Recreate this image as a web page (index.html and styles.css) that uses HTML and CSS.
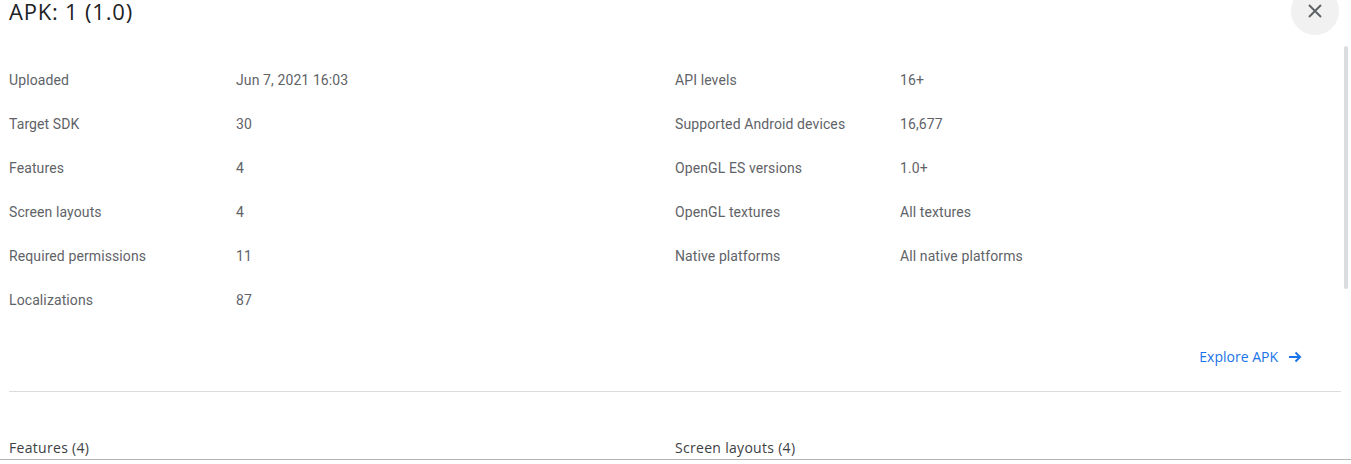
FILE: index.html
```html
<!DOCTYPE html>
<html>
<head>
<meta charset="utf-8">
<link rel="stylesheet" href="styles.css">
</head>
<body>
<div class="dialog">
  <header class="head">
    <h1 class="title">APK: 1 (1.0)</h1>
    <button class="close" aria-label="Close">
      <svg width="14" height="14" viewBox="0 0 14 14"><path d="M1 1L13 13M13 1L1 13" stroke="#5f6368" stroke-width="2" fill="none"/></svg>
    </button>
  </header>
  <div class="details">
    <div class="col">
      <div class="row"><span class="lbl">Uploaded</span><span class="val">Jun 7, 2021 16:03</span></div>
      <div class="row"><span class="lbl">Target SDK</span><span class="val">30</span></div>
      <div class="row"><span class="lbl">Features</span><span class="val">4</span></div>
      <div class="row"><span class="lbl">Screen layouts</span><span class="val">4</span></div>
      <div class="row"><span class="lbl">Required permissions</span><span class="val">11</span></div>
      <div class="row"><span class="lbl">Localizations</span><span class="val">87</span></div>
    </div>
    <div class="col">
      <div class="row"><span class="lbl">API levels</span><span class="val">16+</span></div>
      <div class="row"><span class="lbl">Supported Android devices</span><span class="val">16,677</span></div>
      <div class="row"><span class="lbl">OpenGL ES versions</span><span class="val">1.0+</span></div>
      <div class="row"><span class="lbl">OpenGL textures</span><span class="val">All textures</span></div>
      <div class="row"><span class="lbl">Native platforms</span><span class="val">All native platforms</span></div>
    </div>
  </div>
  <div class="explore-row">
    <a class="explore" href="#">Explore APK
      <svg width="14" height="14" viewBox="0 0 14 14"><path d="M1 7H12M7.5 2.5L12 7L7.5 11.5" stroke="#1a73e8" stroke-width="2" fill="none"/></svg>
    </a>
  </div>
  <div class="divider"></div>
  <div class="sections">
    <h2 class="sec">Features (4)</h2>
    <h2 class="sec">Screen layouts (4)</h2>
  </div>
</div>
<div class="bottom-line"></div>
<div class="scrollbar"></div>
</body>
</html>
```
FILE: styles.css
```css
html, body {
  margin: 0;
  padding: 0;
  background: #fff;
  overflow: hidden;
}
body {
  width: 1351px;
  height: 464px;
  position: relative;
  font-family: Roboto, "Liberation Sans", sans-serif;
}
.dialog {
  padding: 0 10px 0 9px;
}
.head {
  display: flex;
  justify-content: space-between;
  align-items: flex-start;
  height: 58px;
}
.title {
  margin: 0;
  font-family: "Open Sans", sans-serif;
  font-weight: 400;
  font-size: 22px;
  line-height: 22px;
  color: #202124;
  letter-spacing: 0.8px;
}
.close {
  width: 48px;
  height: 48px;
  margin-top: -13px;
  margin-right: 2px;
  border: none;
  border-radius: 50%;
  background: #f1f1f1;
  display: flex;
  align-items: center;
  justify-content: center;
  padding: 0;
}
.close svg { display: block; }
.details {
  display: grid;
  grid-template-columns: 666px 666px;
}
.row {
  display: grid;
  grid-template-columns: 227px 1fr;
  height: 44px;
  align-items: center;
  font-size: 14px;
  color: #5f6368;
  letter-spacing: 0.1px;
}
.col:nth-child(2) .row {
  grid-template-columns: 225px 1fr;
}
.explore-row {
  display: flex;
  justify-content: flex-end;
  align-items: center;
  height: 69px;
  padding-right: 39px;
}
.explore {
  display: flex;
  align-items: center;
  gap: 10px;
  color: #1a73e8;
  text-decoration: none;
  font-family: "Open Sans", sans-serif;
  font-size: 14px;
  font-weight: 500;
}
.divider {
  height: 1px;
  background: #dadce0;
}
.sections {
  display: grid;
  grid-template-columns: 666px 666px;
  padding-top: 47px;
}
.sec {
  margin: 0;
  font-family: "Open Sans", sans-serif;
  font-weight: 400;
  font-size: 14px;
  line-height: 18px;
  color: #3c4043;
  letter-spacing: 0.3px;
}
.bottom-line {
  position: absolute;
  left: 0;
  right: 0;
  top: 459px;
  height: 1px;
  background: #b4b4b4;
}
.scrollbar {
  position: absolute;
  left: 1344px;
  top: 46px;
  width: 4px;
  height: 243px;
  border-radius: 2px;
  background: #dadce0;
}
```
